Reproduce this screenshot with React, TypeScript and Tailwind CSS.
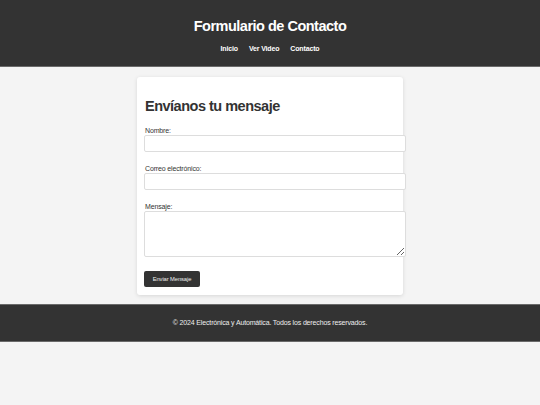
import React from "react";

export default function App() {
  const font = { fontFamily: '"Liberation Sans", Arial, sans-serif' };
  return (
    <div className="min-h-[405px] bg-[#f4f4f4] text-[#333]" style={font}>
      <header className="h-[67px] bg-[#333] border-b border-[#6a6a6a] flex flex-col items-center text-white">
        <h1 className="mt-[18px] text-[14.5px] leading-[16px] font-bold tracking-[-0.5px]">Formulario de Contacto</h1>
        <nav className="mt-[11px] flex gap-[11px] text-[7px] leading-[8px] font-bold tracking-[-0.15px]">
          <a>Inicio</a>
          <a>Ver Video</a>
          <a>Contacto</a>
        </nav>
      </header>

      <main className="flex justify-center pt-[10px] pb-[9px]">
        <div className="w-[266px] bg-white rounded-[3px] shadow-[0_1px_4px_rgba(0,0,0,0.12)] pl-[7px] pr-[7px] pt-[21px] pb-[8px]">
          <h2 className="text-[14.5px] leading-[16px] font-bold text-[#333] ml-[1px] tracking-[-0.5px]">Envíanos tu mensaje</h2>
          <form className="mt-[13px] flex flex-col" onSubmit={(e) => e.preventDefault()}>
            <label className="block text-[7px] leading-[8px] ml-[1px] text-[#333] tracking-[-0.15px]">Nombre:</label>
            <input className="block w-[262px] h-[17px] border border-[#ddd] rounded-[2px] bg-white outline-none" />
            <label className="block mt-[13px] text-[7px] leading-[8px] ml-[1px] text-[#333] tracking-[-0.15px]">Correo electrónico:</label>
            <input className="block w-[262px] h-[17px] border border-[#ddd] rounded-[2px] bg-white outline-none" />
            <label className="block mt-[13px] text-[7px] leading-[8px] ml-[1px] text-[#333] tracking-[-0.15px]">Mensaje:</label>
            <textarea className="block w-[262px] h-[46px] border border-[#ddd] rounded-[2px] bg-white outline-none resize-y" />
            <button className="mt-[14px] w-[56px] h-[16px] bg-[#333] text-[#eee] rounded-[2px] text-[5.8px] leading-[16px] text-center tracking-[-0.1px]">Enviar Mensaje</button>
          </form>
        </div>
      </main>

      <footer className="h-[38px] bg-[#333] border-y border-[#6a6a6a] flex items-center justify-center text-[7px] text-[#eee] tracking-[-0.15px]">
        © 2024 Electrónica y Automática. Todos los derechos reservados.
      </footer>
    </div>
  );
}
